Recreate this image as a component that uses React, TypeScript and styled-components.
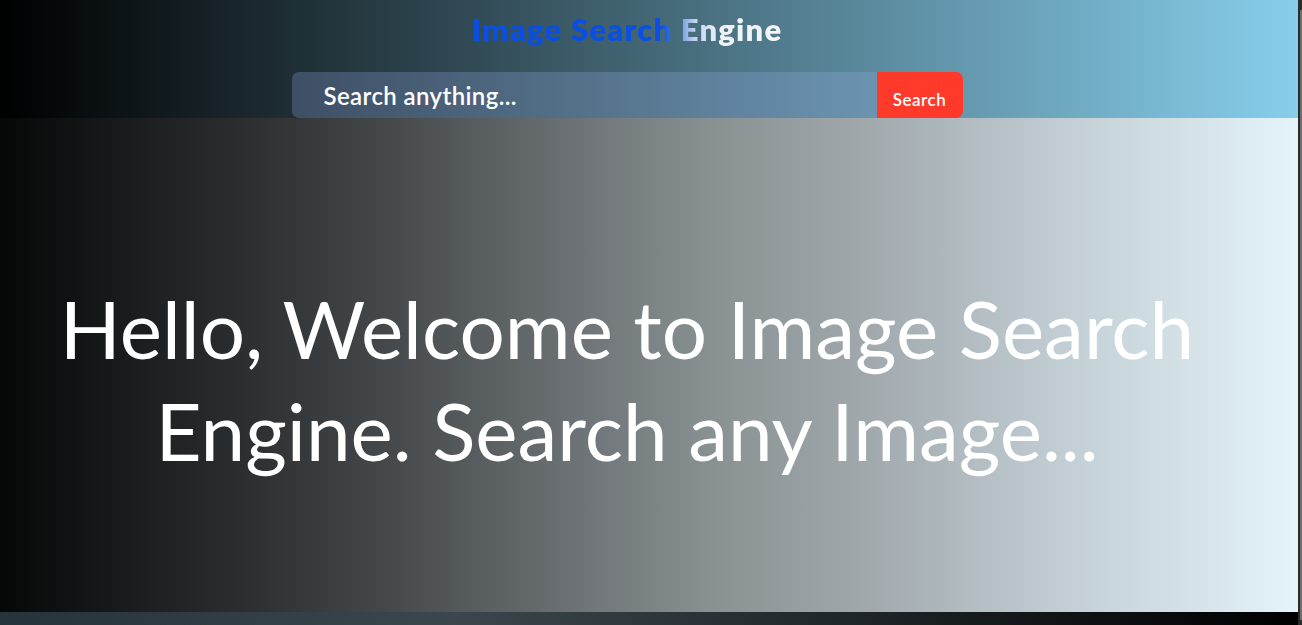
import React from "react";
import styled, { createGlobalStyle } from "styled-components";

const GlobalStyle = createGlobalStyle`
  body {
    margin: 0;
    font-family: "Lato", "Noto Sans", sans-serif;
    background: #000;
  }
`;

const Page = styled.div`
  display: flex;
  flex-direction: column;
  padding-right: 4px;
`;

const ScrollTrack = styled.div`
  position: fixed;
  top: 0;
  right: 0;
  width: 4px;
  height: 100vh;
  background: #2b2b2b;
  display: flex;
  justify-content: flex-end;
  padding: 10px 0 5px;
  box-sizing: border-box;
`;

const ScrollThumb = styled.div`
  width: 2px;
  height: 100%;
  background: #6e6e6e;
`;

const Header = styled.header`
  height: 118px;
  background: linear-gradient(to right, #000000, #87ceeb);
  display: flex;
  flex-direction: column;
  align-items: center;
  padding-right: 44px;
  box-sizing: border-box;
`;

const Title = styled.h1`
  margin: 12px 0 0;
  font-size: 31px;
  font-weight: 800;
  line-height: 34px;
  letter-spacing: 1.2px;
  background: linear-gradient(
    to right,
    #0b4ee0 0%,
    #0a50e4 61%,
    #3d78e6 65%,
    #7fa2e8 68%,
    #c4d3ef 72%,
    #eef2f8 80%,
    #f4f6fa 100%
  );
  -webkit-background-clip: text;
  background-clip: text;
  color: transparent;
`;

const SearchForm = styled.form`
  margin-top: 26px;
  display: flex;
  width: 671px;
  height: 46px;
  border-radius: 7px;
  overflow: hidden;
`;

const SearchInput = styled.input`
  flex: 1;
  border: none;
  outline: none;
  padding: 0 0 0 32px;
  background: linear-gradient(to right, #3e4f65, #6b94b1);
  color: #fff;
  font-family: "Lato", "Noto Sans", sans-serif;
  font-size: 24px;
  font-weight: 600;
  letter-spacing: 0.4px;
  &::placeholder {
    color: #fff;
    opacity: 1;
  }
`;

const SearchButton = styled.button`
  width: 86px;
  border: none;
  background: #ff3a2a;
  color: #fff;
  font-family: "Lato", "Noto Sans", sans-serif;
  font-size: 17px;
  font-weight: 600;
  letter-spacing: 0.5px;
  padding: 8px 0 0;
  cursor: pointer;
`;

const Hero = styled.section`
  height: 494px;
  background: linear-gradient(
    to right,
    #060707 0%,
    #2a2c2e 18%,
    #45494b 30%,
    #6b7174 44%,
    #8a9193 55%,
    #a1a9ad 67%,
    #c2ced4 82%,
    #e4f4fa 100%
  );
  display: flex;
  align-items: center;
  justify-content: center;
  padding: 28px 44px 0 0;
  box-sizing: border-box;
`;

const Headline = styled.h2`
  margin: 0;
  max-width: 1200px;
  text-align: center;
  color: #fff;
  font-size: 80px;
  font-weight: 400;
  line-height: 102px;
`;

const Footer = styled.div`
  height: 28px;
  background: linear-gradient(to right, #25333a 0%, #3b474d 35%, #000 100%);
`;

export default function App() {
  return (
    <>
      <GlobalStyle />
      <Page>
        <Header>
          <Title>Image Search Engine</Title>
          <SearchForm onSubmit={(e) => e.preventDefault()}>
            <SearchInput placeholder="Search anything..." />
            <SearchButton type="submit">Search</SearchButton>
          </SearchForm>
        </Header>
        <Hero>
          <Headline>
            Hello, Welcome to Image Search Engine. Search any Image...
          </Headline>
        </Hero>
        <Footer />
      </Page>
      <ScrollTrack>
        <ScrollThumb />
      </ScrollTrack>
    </>
  );
}
